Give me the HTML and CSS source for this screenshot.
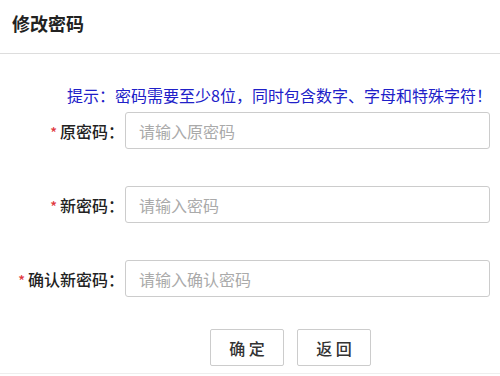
FILE: index.html
```html
<!DOCTYPE html>
<html lang="zh-CN">
<head>
  <meta charset="UTF-8">
  <title>修改密码</title>
  <link rel="stylesheet" href="styles.css">
</head>
<body>
  <div class="dialog">
    <div class="header">修改密码</div>
    <div class="body">
      <p class="tip">提示：密码需要至少8位，同时包含数字、字母和特殊字符！</p>
      <div class="form">
        <div class="row">
          <label class="label"><span class="star">*</span>原密码：</label>
          <input class="ipt" type="password" placeholder="请输入原密码">
        </div>
        <div class="row">
          <label class="label"><span class="star">*</span>新密码：</label>
          <input class="ipt" type="password" placeholder="请输入密码">
        </div>
        <div class="row">
          <label class="label"><span class="star">*</span>确认新密码：</label>
          <input class="ipt" type="password" placeholder="请输入确认密码">
        </div>
      </div>
      <div class="btns">
        <button class="btn">确 定</button>
        <button class="btn">返 回</button>
      </div>
    </div>
  </div>
</body>
</html>
```

FILE: styles.css
```css
* {
  padding: 0;
  margin: 0;
  box-sizing: border-box;
}

body {
  background-color: #fff;
  font-family: "Noto Sans CJK SC", "Noto Sans", sans-serif;
  color: #333;
}

.dialog {
  width: 500px;
  height: 374px;
  border-bottom: 1px solid #eee;
}

.header {
  height: 54px;
  line-height: 46px;
  padding-left: 12px;
  font-size: 18px;
  font-weight: bold;
  color: #222;
  border-bottom: 1px solid #ddd;
}

.tip {
  margin-top: 29px;
  padding-right: 8px;
  text-align: right;
  font-size: 16px;
  line-height: 24px;
  color: #2020c8;
}

.form {
  margin-top: 5px;
  display: flex;
  flex-direction: column;
  gap: 37px;
}

.row {
  display: flex;
  align-items: center;
  gap: 1px;
}

.label {
  width: 124px;
  text-align: right;
  font-size: 16px;
  font-weight: 500;
  color: #222;
}

.star {
  color: #e0393e;
  font-size: 14px;
  margin-right: 3px;
}

.ipt {
  width: 365px;
  height: 37px;
  padding: 0 13px;
  border: 1px solid #ccc;
  border-radius: 3px;
  font-size: 16px;
  font-family: inherit;
  outline: none;
}

.ipt::placeholder {
  color: #aaa;
}

.btns {
  margin-top: 32px;
  padding-left: 210px;
  display: flex;
  gap: 13px;
}

.btn {
  width: 74px;
  height: 37px;
  background-color: #fff;
  border: 1px solid #ccc;
  border-radius: 2px;
  font-size: 16px;
  font-weight: 500;
  font-family: inherit;
  color: #333;
  cursor: pointer;
}
```
